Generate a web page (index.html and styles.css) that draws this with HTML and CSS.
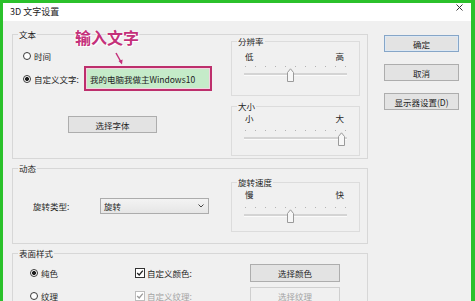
FILE: index.html
```html
<!DOCTYPE html>
<html lang="zh-CN">
<head>
    <meta charset="UTF-8">
    <title>3D 文字设置</title>
    <link rel="stylesheet" href="styles.css">
</head>
<body>
<div class="window">
    <div class="titlebar">
        <span class="title">3D 文字设置</span>
        <svg class="close" width="7" height="7" viewBox="0 0 7 7">
            <path d="M0.5 0.5 L6.5 6.5 M6.5 0.5 L0.5 6.5" stroke="#333" stroke-width="1" fill="none"/>
        </svg>
    </div>

    <div class="dialog">
        <div class="groups">
            <!-- 文本 -->
            <div class="group">
                <span class="group-title">文本</span>
                <div class="group-body">
                    <div class="pane">
                        <div class="option first"><span class="radio"></span>时间</div>
                        <div class="custom-row">
                            <div class="option wide"><span class="radio checked"></span>自定义文字:</div>
                            <div class="text-input">我的电脑我做主Windows10</div>
                        </div>
                        <div class="btn btn-font">选择字体</div>
                    </div>
                    <div class="sliders sliders-text">
                        <div class="slider-box box-res">
                            <span class="group-title">分辨率</span>
                            <div class="slider-labels"><span>低</span><span>高</span></div>
                            <div class="slider">
                                <div class="ticks"></div>
                                <div class="track"></div>
                                <svg class="thumb" style="left: 45%" width="7" height="14" viewBox="0 0 7 14">
                                    <path d="M0.5 4.5 L3.5 0.8 L6.5 4.5 V13.5 H0.5 Z" fill="#f7f7f7" stroke="#9a9a9a"/>
                                </svg>
                            </div>
                        </div>
                        <div class="slider-box box-size">
                            <span class="group-title">大小</span>
                            <div class="slider-labels"><span>小</span><span>大</span></div>
                            <div class="slider">
                                <div class="ticks"></div>
                                <div class="track"></div>
                                <svg class="thumb" style="left: 94%" width="7" height="14" viewBox="0 0 7 14">
                                    <path d="M0.5 4.5 L3.5 0.8 L6.5 4.5 V13.5 H0.5 Z" fill="#f7f7f7" stroke="#9a9a9a"/>
                                </svg>
                            </div>
                        </div>
                    </div>
                </div>
            </div>

            <!-- 动态 -->
            <div class="group">
                <span class="group-title">动态</span>
                <div class="group-body">
                    <div class="pane">
                        <div class="spin-row">
                            <span class="spin-label">旋转类型:</span>
                            <div class="combo">
                                <span>旋转</span>
                                <svg width="6" height="4" viewBox="0 0 6 4">
                                    <path d="M0.5 0.5 L3 3 L5.5 0.5" stroke="#444" fill="none"/>
                                </svg>
                            </div>
                        </div>
                    </div>
                    <div class="sliders sliders-motion">
                        <div class="slider-box box-speed">
                            <span class="group-title">旋转速度</span>
                            <div class="slider-labels"><span>慢</span><span>快</span></div>
                            <div class="slider">
                                <div class="ticks"></div>
                                <div class="track"></div>
                                <svg class="thumb" style="left: 45%" width="7" height="14" viewBox="0 0 7 14">
                                    <path d="M0.5 4.5 L3.5 0.8 L6.5 4.5 V13.5 H0.5 Z" fill="#f7f7f7" stroke="#9a9a9a"/>
                                </svg>
                            </div>
                        </div>
                    </div>
                </div>
            </div>

            <!-- 表面样式 -->
            <div class="group group-surface">
                <span class="group-title">表面样式</span>
                <div class="surface">
                    <div class="option"><span class="radio checked"></span>纯色</div>
                    <div class="option"><span class="check"><svg width="8" height="8" viewBox="0 0 8 8"><path d="M1.2 4 L3.2 6 L6.8 1.6" stroke="#222" stroke-width="1.3" fill="none"/></svg></span>自定义颜色:</div>
                    <div class="btn">选择颜色</div>
                    <div class="option"><span class="radio"></span>纹理</div>
                    <div class="option disabled"><span class="check"><svg width="8" height="8" viewBox="0 0 8 8"><path d="M1.2 4 L3.2 6 L6.8 1.6" stroke="#9a9a9a" stroke-width="1.3" fill="none"/></svg></span>自定义纹理:</div>
                    <div class="btn disabled">选择纹理</div>
                </div>
            </div>
        </div>

        <div class="actions">
            <div class="btn btn-default">确定</div>
            <div class="btn">取消</div>
            <div class="btn">显示器设置(D)</div>
        </div>
    </div>

    <div class="note">
        输入文字
        <svg class="note-arrow" width="10" height="13" viewBox="0 0 10 13">
            <path d="M2 1 L7 10" stroke="#c4307a" stroke-width="1.5" fill="none"/>
            <path d="M4.5 9 L8 12.5 L8.6 7.5 Z" fill="#c4307a"/>
        </svg>
    </div>
</div>
</body>
</html>
```

FILE: styles.css
```css
body {
    margin: 0;
    height: 301px;
    overflow: hidden;
    background: #2bc12b;
    font-family: "Noto Sans CJK SC", "Noto Sans", sans-serif;
    font-size: 8.5px;
    line-height: 12px;
    color: #1e1e1e;
}

.window {
    position: relative;
    margin: 3px 4px 0 3px;
    height: 298px;
    overflow: hidden;
    background: #f0f0f0;
}

.titlebar {
    height: 18px;
    background: #fff;
    display: flex;
    justify-content: space-between;
    padding: 0 8px 0 7px;
}
.title {
    font-size: 9px;
    line-height: 16px;
    margin-top: 1px;
    color: #222;
}
.close {
    margin-top: 1px;
}

.dialog {
    display: flex;
    padding: 13px 0 0 9px;
}
.groups {
    width: 356px;
}

.group {
    border: 1px solid #d7d7d7;
    margin-top: 9px;
}
.group:first-child {
    margin-top: 0;
}
.group-title {
    display: block;
    width: max-content;
    height: 12px;
    margin: -7px 0 0 5px;
    padding: 0 1px;
    background: #f0f0f0;
}
.group-body {
    display: flex;
}
.pane {
    width: 218px;
}

/* radios / checkboxes */
.option {
    display: flex;
    align-items: center;
    line-height: 14px;
}
.option.first {
    margin-top: 9px;
    padding-left: 10px;
}
.option.wide {
    width: 61px;
    padding-left: 10px;
}
.radio {
    width: 6px;
    height: 6px;
    border: 1px solid #3a3a3a;
    border-radius: 50%;
    background: #fff;
    margin-right: 3px;
    flex: none;
}
.radio.checked {
    background: radial-gradient(circle, #1e1e1e 0 1.7px, #fff 2.3px);
}
.check {
    width: 8px;
    height: 8px;
    border: 1px solid #333;
    background: #fff;
    margin-right: 2px;
    display: flex;
    flex: none;
}
.check svg {
    display: block;
}
.option.disabled {
    color: #a3a3a3;
}
.option.disabled .check {
    border-color: #bdbdbd;
}

.custom-row {
    display: flex;
    align-items: center;
    margin-top: 3px;
}
.text-input {
    width: 128px;
    height: 25px;
    box-sizing: border-box;
    border: 2px solid #bd2f6c;
    box-shadow: inset 0 0 0 1px #f4d3e1;
    background: #c5ebc9;
    padding-left: 4px;
    display: flex;
    align-items: center;
    color: #222;
}

/* buttons */
.btn {
    height: 17px;
    box-sizing: border-box;
    border: 1px solid #adadad;
    background: #e3e3e3;
    display: flex;
    align-items: center;
    justify-content: center;
}
.btn-default {
    border-color: #86a6c8;
    box-shadow: inset 0 0 0 1px #dde8f3;
}
.btn.disabled {
    color: #a3a3a3;
    border-color: #cfcfcf;
    background: #f0f0f0;
}
.btn-font {
    width: 89px;
    margin: 25px 0 0 55px;
}
.actions {
    width: 75px;
    margin: 1px 0 0 16px;
    display: flex;
    flex-direction: column;
    gap: 12px;
}

/* slider boxes */
.sliders {
    width: 129px;
    margin-left: auto;
    margin-right: 7px;
}
.sliders-text {
    margin-top: 1px;
    margin-bottom: 2px;
}
.sliders-motion {
    margin-top: 8px;
    margin-bottom: 11px;
}
.slider-box {
    border: 1px solid #dcdcdc;
    padding: 0 12px 9px;
}
.slider-box .group-title {
    margin-left: -7px;
}
.box-res {
    padding-bottom: 13px;
}
.box-size {
    margin-top: 10px;
}
.box-speed {
    padding-bottom: 8px;
}
.slider-labels {
    display: flex;
    justify-content: space-between;
    padding: 0 3px 0 1px;
}
.box-res .slider-labels {
    margin-top: 3px;
}
.slider {
    position: relative;
    height: 16px;
    margin-top: 6px;
}
.box-res .slider {
    margin-top: 4px;
}
.box-speed .slider {
    margin-top: 7px;
}
.ticks {
    height: 1px;
    margin: 2px 1px 0;
    background: repeating-linear-gradient(90deg, #b3b3b3 0 1px, transparent 1px 10px);
}
.track {
    height: 2px;
    margin-top: 6px;
    background: #d4d4d4;
    border-bottom: 1px solid #fbfbfb;
}
.thumb {
    position: absolute;
    top: 2px;
    margin-left: -3px;
}

/* 动态 */
.spin-row {
    display: flex;
    align-items: center;
    margin-top: 24px;
    padding-left: 20px;
}
.spin-label {
    width: 67px;
}
.combo {
    width: 109px;
    height: 16px;
    box-sizing: border-box;
    border: 1px solid #acacac;
    background: linear-gradient(#f3f3f3, #e6e6e6);
    display: flex;
    align-items: center;
    justify-content: space-between;
    padding: 0 4px 0 3px;
}

/* 表面样式 */
.group-surface {
    height: 60px;
}
.surface {
    display: grid;
    grid-template-columns: 105px 115px 90px;
    grid-auto-rows: 18px;
    row-gap: 5px;
    align-items: center;
    margin-top: 5px;
    padding-left: 17px;
}
.surface .btn {
    height: 18px;
}

/* annotation over the dialog */
.note {
    position: absolute;
    left: 72px;
    top: 24px;
    font-size: 16px;
    line-height: 20px;
    font-weight: bold;
    color: #c4307a;
    text-shadow: 1px 1px 0 #fff, -1px 0 1px #fff;
}
.note-arrow {
    position: absolute;
    left: 39px;
    top: 25px;
}
```
